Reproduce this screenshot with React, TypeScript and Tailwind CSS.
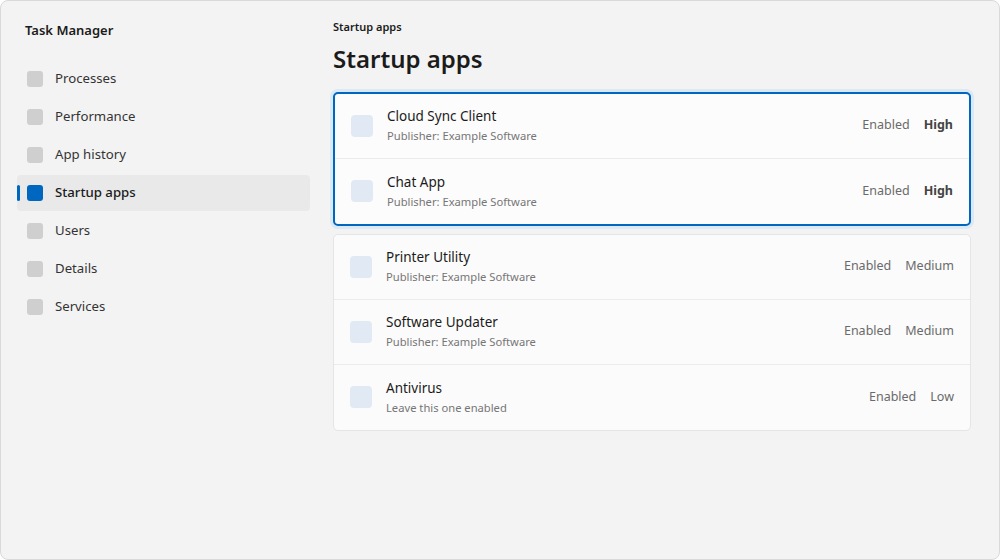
import React from "react";

const nav = ["Processes", "Performance", "App history", "Startup apps", "Users", "Details", "Services"];
type App = { name: string; pub: string; status: string; impact: string };
const hi: App[] = [
  { name: "Cloud Sync Client", pub: "Publisher: Example Software", status: "Enabled", impact: "High" },
  { name: "Chat App", pub: "Publisher: Example Software", status: "Enabled", impact: "High" },
];
const rest: App[] = [
  { name: "Printer Utility", pub: "Publisher: Example Software", status: "Enabled", impact: "Medium" },
  { name: "Software Updater", pub: "Publisher: Example Software", status: "Enabled", impact: "Medium" },
  { name: "Antivirus", pub: "Leave this one enabled", status: "Enabled", impact: "Low" },
];

function Row({ a, bold, last }: { a: App; bold?: boolean; last?: boolean }) {
  return (
    <div className={`flex items-center h-[65px] pl-4 pr-4 ${last ? "" : "border-b border-[#ebebeb]"}`}>
      <div className="w-[22px] h-[22px] rounded-[4px] bg-[#e1e9f4]" />
      <div className="ml-[14px] flex-1">
        <div className="text-[13.5px] leading-[18px] text-[#1b1b1b]">{a.name}</div>
        <div className="text-[11.2px] leading-[16px] text-[#767676] mt-[3px]">{a.pub}</div>
      </div>
      <div className="text-[12.5px] text-[#6a6a6a]">{a.status}</div>
      <div className={`text-[12.5px] ml-[14px] ${bold ? "font-bold text-[#444]" : "text-[#6a6a6a]"}`}>{a.impact}</div>
    </div>
  );
}

export default function App() {
  return (
    <div className="w-[1000px] h-[560px] bg-white" style={{ fontFamily: '"Noto Sans", "Open Sans", sans-serif' }}>
      <div className="w-full h-full bg-[#f3f3f3] border border-[#d9d9d9] rounded-[8px] flex overflow-hidden">
        <div className="w-[316px] pl-4 pr-[7px] pt-[20px]">
          <div className="text-[13px] font-semibold text-[#1b1b1b] pl-[8px]">Task Manager</div>
          <div className="mt-[20px] flex flex-col gap-[2px]">
            {nav.map((n) => {
              const sel = n === "Startup apps";
              return (
                <div key={n} className={`relative flex items-center h-[36px] rounded-[4px] ${sel ? "bg-[#e9e9e9]" : ""}`}>
                  {sel && <div className="absolute left-0 top-[10px] w-[3px] h-[16px] rounded-full bg-[#0067c0]" />}
                  <div className={`ml-[10px] w-[16px] h-[16px] rounded-[3px] ${sel ? "bg-[#0067c0]" : "bg-[#cfcfcf]"}`} />
                  <div className={`ml-[12px] text-[13.2px] ${sel ? "text-[#1b1b1b] font-medium" : "text-[#333]"}`}>{n}</div>
                </div>
              );
            })}
          </div>
        </div>
        <div className="flex-1 pt-[18px] pr-[28px] pl-[16px]">
          <div className="text-[11px] font-semibold text-[#1b1b1b]">Startup apps</div>
          <div className="text-[24px] font-semibold text-[#1b1b1b] leading-[34px] mt-[6px]">Startup apps</div>
          <div className="mt-[16px] bg-[#fcfcfc] border-2 border-[#0067c0] rounded-[5px] shadow-[0_0_0_3px_#dbe8f5]">
            {hi.map((a, i) => <Row key={a.name} a={a} bold last={i === hi.length - 1} />)}
          </div>
          <div className="mt-[8px] bg-[#fbfbfb] border border-[#e5e5e5] rounded-[5px]">
            {rest.map((a, i) => <Row key={a.name} a={a} last={i === rest.length - 1} />)}
          </div>
        </div>
      </div>
    </div>
  );
}
